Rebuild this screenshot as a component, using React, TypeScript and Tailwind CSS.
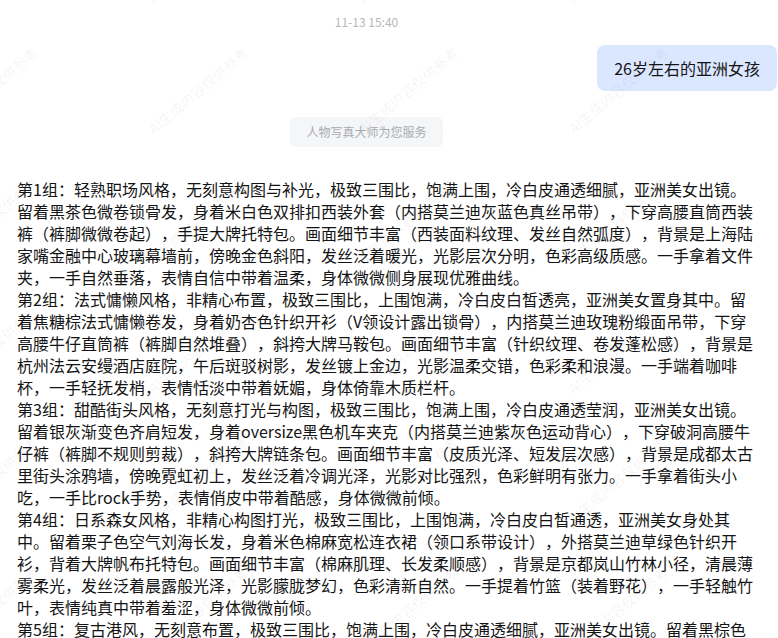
import React from 'react';

const GROUPS: string[] = [
  '第1组：轻熟职场风格，无刻意构图与补光，极致三围比，饱满上围，冷白皮通透细腻，亚洲美女出镜。留着黑茶色微卷锁骨发，身着米白色双排扣西装外套（内搭莫兰迪灰蓝色真丝吊带），下穿高腰直筒西装裤（裤脚微微卷起），手提大牌托特包。画面细节丰富（西装面料纹理、发丝自然弧度），背景是上海陆家嘴金融中心玻璃幕墙前，傍晚金色斜阳，发丝泛着暖光，光影层次分明，色彩高级质感。一手拿着文件夹，一手自然垂落，表情自信中带着温柔，身体微微侧身展现优雅曲线。',
  '第2组：法式慵懒风格，非精心布置，极致三围比，上围饱满，冷白皮白皙透亮，亚洲美女置身其中。留着焦糖棕法式慵懒卷发，身着奶杏色针织开衫（V领设计露出锁骨），内搭莫兰迪玫瑰粉缎面吊带，下穿高腰牛仔直筒裤（裤脚自然堆叠），斜挎大牌马鞍包。画面细节丰富（针织纹理、卷发蓬松感），背景是杭州法云安缦酒店庭院，午后斑驳树影，发丝镀上金边，光影温柔交错，色彩柔和浪漫。一手端着咖啡杯，一手轻抚发梢，表情恬淡中带着妩媚，身体倚靠木质栏杆。',
  '第3组：甜酷街头风格，无刻意打光与构图，极致三围比，饱满上围，冷白皮通透莹润，亚洲美女出镜。留着银灰渐变色齐肩短发，身着oversize黑色机车夹克（内搭莫兰迪紫灰色运动背心），下穿破洞高腰牛仔裤（裤脚不规则剪裁），斜挎大牌链条包。画面细节丰富（皮质光泽、短发层次感），背景是成都太古里街头涂鸦墙，傍晚霓虹初上，发丝泛着冷调光泽，光影对比强烈，色彩鲜明有张力。一手拿着街头小吃，一手比rock手势，表情俏皮中带着酷感，身体微微前倾。',
  '第4组：日系森女风格，非精心构图打光，极致三围比，上围饱满，冷白皮白皙通透，亚洲美女身处其中。留着栗子色空气刘海长发，身着米色棉麻宽松连衣裙（领口系带设计），外搭莫兰迪草绿色针织开衫，背着大牌帆布托特包。画面细节丰富（棉麻肌理、长发柔顺感），背景是京都岚山竹林小径，清晨薄雾柔光，发丝泛着晨露般光泽，光影朦胧梦幻，色彩清新自然。一手提着竹篮（装着野花），一手轻触竹叶，表情纯真中带着羞涩，身体微微前倾。',
  '第5组：复古港风，无刻意布置，极致三围比，饱满上围，冷白皮通透细腻，亚洲美女出镜。留着黑棕色大波浪卷发，身着酒红色丝绒复古连衣裙（方领设计），搭配珍珠耳环，手拿大牌复古手袋。画面细节丰富（丝绒光泽、卷发弧度），背景是香港旧街霓虹招牌下，夜色氤氲，光影浓郁，色彩复古胶片感。',
];

// 水印：AI生成内容仅供参考
const Watermark = () => {
  const marks: { x: number; y: number }[] = [];
  for (let row = -1; row < 6; row++) {
    for (let col = 0; col < 5; col++) {
      marks.push({ x: -12 + col * 210, y: 90 + row * 130 });
    }
  }
  return (
    <div className="pointer-events-none absolute inset-0 z-10 overflow-hidden">
      {marks.map((m, i) => (
        <span
          key={i}
          className="absolute whitespace-nowrap text-[14px] leading-none text-black/[0.06] -translate-x-1/2 -translate-y-1/2 rotate-[-40deg]"
          style={{ left: m.x, top: m.y }}
        >
          AI生成内容仅供参考
        </span>
      ))}
    </div>
  );
};

export default function App() {
  return (
    <div
      className="relative h-[638px] w-[778px] overflow-hidden bg-white text-[#141414] [text-spacing-trim:space-all]"
      style={{ fontFamily: '"Noto Sans CJK SC", "Noto Sans", sans-serif' }}
    >
      {/* 时间 */}
      <div className="flex w-[733px] justify-center pt-[14px]">
        <span className="text-[12px] leading-4 text-[#b4b8be]">11-13 15:40</span>
      </div>

      {/* 用户消息 */}
      <div className="mt-[15px] flex justify-end pr-[1px]">
        <div className="rounded-lg bg-[#dbe7ff] px-[17px] py-3 text-[16px] leading-[22px]">
          26岁左右的亚洲女孩
        </div>
      </div>

      {/* 系统提示 */}
      <div className="mt-[26px] flex w-[733px] justify-center">
        <div className="rounded-md bg-[#f5f6f7] px-4 text-[12px] leading-[30px] text-[#a8abb2]">
          人物写真大师为您服务
        </div>
      </div>

      {/* 回复内容 */}
      <div className="mt-[31px] w-[740px] pl-[17px] box-content text-[16px] leading-[22px]">
        {GROUPS.map((g) => (
          <div key={g.slice(0, 4)}>{g}</div>
        ))}
      </div>

      <Watermark />
    </div>
  );
}
